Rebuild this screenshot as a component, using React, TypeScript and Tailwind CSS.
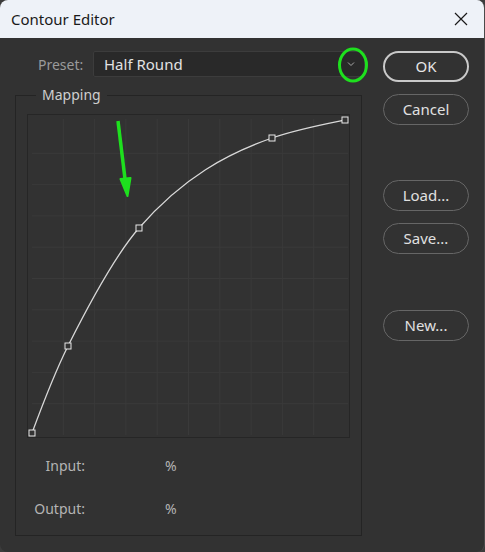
import React from 'react';

const font = { fontFamily: '"Noto Sans", "Open Sans", sans-serif' };

const CurveGrid = () => {
  // plotting area inside the 323x324 box, 10 divisions
  const lines = Array.from({ length: 9 }, (_, i) => 4 + (313 * (i + 1)) / 10);
  const pts: [number, number][] = [
    [4, 318],
    [40, 231],
    [111, 113],
    [244, 23],
    [317, 5],
  ];
  return (
    <svg width="323" height="324" className="block">
      {lines.map((v) => (
        <g key={v}>
          <line x1={v} y1="4" x2={v} y2="320" stroke="#3a3a3a" strokeWidth="1" />
          <line x1="4" y1={324 - v} x2="320" y2={324 - v} stroke="#3a3a3a" strokeWidth="1" />
        </g>
      ))}
      <path
        d="M4 318 C16 285.6 28 255 40 231 C63.7 183.7 87.3 140.2 111 113 C155.3 62 199.7 38.5 244 23 C268.3 14.5 292.7 9.9 317 5"
        fill="none"
        stroke="#d8d8d8"
        strokeWidth="1.3"
      />
      {pts.map(([x, y]) => (
        <rect key={x} x={x - 3} y={y - 3} width="6" height="6" fill="#333" stroke="#e8e8e8" strokeWidth="1" />
      ))}
    </svg>
  );
};

const DialogButton = ({ label, primary }: { label: string; primary?: boolean }) => (
  <button
    className={
      primary
        ? 'w-[86px] h-[31px] rounded-full border-2 border-[#c9c9c9] text-[15px] text-[#e6e6e6]'
        : 'w-[86px] h-[31px] rounded-full border border-[#666666] text-[15px] text-[#e0e0e0]'
    }
  >
    {label}
  </button>
);

const App = () => {
  return (
    <div className="w-[485px] h-[552px] bg-[#3c3c3c]" style={font}>
      <div className="relative w-full h-full rounded-lg overflow-hidden flex flex-col bg-[#323232] border-r border-[#4a4a4a]">
        {/* Title bar */}
        <div className="h-[38px] shrink-0 bg-[#eef2f8] flex items-center justify-between pl-[11px] pr-[15px]">
          <span className="text-[15px] text-[#1a1a1a]">Contour Editor</span>
          <svg width="16" height="16" viewBox="0 0 16 16">
            <path d="M2 2 L14 14 M14 2 L2 14" stroke="#1a1a1a" strokeWidth="1.2" />
          </svg>
        </div>

        {/* Body */}
        <div className="flex flex-1">
          {/* Left column */}
          <div className="pl-[15px] pt-[13px] flex flex-col">
            <div className="flex items-center h-[26px]">
              <span className="ml-[23px] w-[55px] text-[14px] text-[#9a9a9a]">Preset:</span>
              <div className="w-[272px] h-[26px] bg-[#292929] border border-[#3c3c3c] rounded-[2px] flex items-center justify-between pl-[10px] pr-[9px]">
                <span className="text-[15px] text-[#e2e2e2]">Half Round</span>
                <svg width="8" height="6" viewBox="0 0 8 6">
                  <path d="M1 1.5 L4 4.5 L7 1.5" fill="none" stroke="#a8a8a8" strokeWidth="1" />
                </svg>
              </div>
            </div>

            {/* Mapping group */}
            <div className="relative mt-[18px] w-[347px] h-[441px] border border-[#242424]">
              <span className="absolute -top-[11px] left-[20px] px-[6px] bg-[#323232] text-[14px] text-[#cfcfcf] leading-[20px]">
                Mapping
              </span>
              <div className="ml-[11px] mt-[18px] w-[323px] h-[324px] border border-[#262626]">
                <CurveGrid />
              </div>
              <div className="mt-[17px] flex flex-col gap-[22px] text-[14px] text-[#b4b4b4]">
                <div className="flex items-center h-[21px]">
                  <span className="w-[69px] text-right">Input:</span>
                  <span className="ml-[80px]">%</span>
                </div>
                <div className="flex items-center h-[21px]">
                  <span className="w-[69px] text-right">Output:</span>
                  <span className="ml-[80px]">%</span>
                </div>
              </div>
            </div>
          </div>

          {/* Right column */}
          <div className="ml-[18px] pt-[13px] flex flex-col">
            <DialogButton label="OK" primary />
            <div className="mt-[12px]">
              <DialogButton label="Cancel" />
            </div>
            <div className="mt-[55px]">
              <DialogButton label="Load..." />
            </div>
            <div className="mt-[12px]">
              <DialogButton label="Save..." />
            </div>
            <div className="mt-[56px]">
              <DialogButton label="New..." />
            </div>
          </div>
        </div>

        {/* Annotations */}
        <svg className="absolute left-0 top-0 pointer-events-none" width="485" height="552">
          <ellipse cx="353" cy="65" rx="13.5" ry="16" fill="none" stroke="#1ee01e" strokeWidth="3" />
          <path d="M118 121 L125 179" stroke="#1ee01e" strokeWidth="3.5" />
          <path d="M120.5 179 L127.5 196 L130.5 178 Z" fill="#1ee01e" stroke="#1ee01e" strokeWidth="2" strokeLinejoin="round" />
        </svg>
      </div>
    </div>
  );
};

export default App;
